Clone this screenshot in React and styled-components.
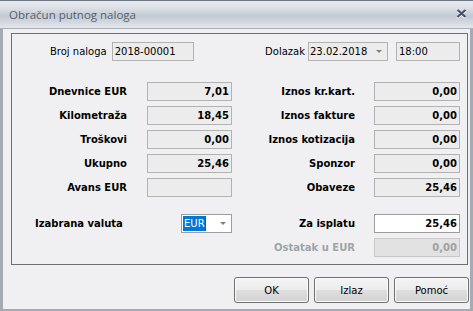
import React from "react";
import styled, { createGlobalStyle } from "styled-components";

const Global = createGlobalStyle`
  html, body { margin: 0; padding: 0; background: #f0f0f2; }
  body { font-family: "DejaVu Sans", Verdana, sans-serif; font-size: 10px; color: #000; }
  * { box-sizing: border-box; }
`;

const Window = styled.div`
  width: 473px;
  height: 311px;
  display: flex;
  flex-direction: column;
  border-top: 1px solid #6f7580;
  background: #f0f0f2;
`;

const TitleBar = styled.div`
  height: 28px;
  flex: none;
  display: flex;
  align-items: center;
  justify-content: space-between;
  padding: 0 6px 1px 9px;
  background: linear-gradient(to bottom, #e6e9ee 0%, #dde1e7 25%, #c2c9d2 55%, #d4d9e0 80%, #e5e8ed 100%);
  border-bottom: 1px solid #a9aeb6;
`;

const Title = styled.span`
  font-family: "Open Sans", "Liberation Sans", sans-serif;
  font-size: 11.5px;
  color: #55606e;
`;

const Frame = styled.div`
  flex: 1;
  display: flex;
  flex-direction: column;
  border-left: 3px solid #a6abb3;
  border-right: 3px solid #a6abb3;
  border-bottom: 2px solid #a6abb3;
  padding: 4px 2px 0 8px;
`;

const Panel = styled.div`
  border: 1px solid #6e6e6e;
  padding: 8px 7px 7px 0;
  display: flex;
  flex-direction: column;
`;

const Header = styled.div`
  display: flex;
  justify-content: space-between;
  align-items: center;
  height: 19px;
`;

const Group = styled.div`
  display: flex;
  align-items: center;
  gap: ${(p) => p.$gap || 5}px;
  margin-left: ${(p) => p.$ml || 0}px;
`;

const PlainLabel = styled.span`
  font-size: 10px;
  color: #000;
`;

const Box = styled.div`
  width: ${(p) => (p.$w ? `${p.$w}px` : "auto")};
  height: 19px;
  border: 1px solid ${(p) => (p.$white ? "#9c9c9c" : p.$disabled ? "#c8c8c8" : "#b2b2b2")};
  background: ${(p) => (p.$white ? "#ffffff" : p.$disabled ? "#e2e2e2" : "#ececec")};
  display: flex;
  align-items: center;
  justify-content: ${(p) => (p.$right ? "flex-end" : "flex-start")};
  padding: ${(p) => (p.$right ? "0 2px 0 0" : "0 0 0 2px")};
  font-size: 10px;
  font-weight: ${(p) => (p.$bold ? 700 : 400)};
  color: ${(p) => (p.$disabled ? "#a0a0a0" : "#000")};
  justify-self: ${(p) => (p.$end ? "end" : "stretch")};
  white-space: nowrap;
`;

const Combo = styled(Box)`
  justify-content: space-between;
  padding: 0 5px 0 1px;
`;

const Arrow = styled.span`
  width: 0;
  height: 0;
  border-left: 3px solid transparent;
  border-right: 3px solid transparent;
  border-top: 3px solid #808080;
`;

const Selected = styled.span`
  background: #0078d7;
  color: #fff;
  padding: 2px 0 2px 1px;
  border-right: 1px solid #6a4a2a;
`;

const Grid = styled.div`
  display: grid;
  grid-template-columns: 135px 85px 142px 86px;
  grid-template-rows: repeat(5, 19px) 7px 19px 19px;
  row-gap: 5px;
  margin-top: 21px;
`;

const Gap = styled.div`
  grid-column: 1 / -1;
`;

const Label = styled.div`
  display: flex;
  align-items: center;
  justify-content: ${(p) => (p.$left ? "flex-start" : "flex-end")};
  padding-right: ${(p) => (p.$left ? 0 : p.$pr || 20)}px;
  padding-left: ${(p) => (p.$left ? 23 : 0)}px;
  font-weight: 700;
  font-size: 10px;
  color: ${(p) => (p.$muted ? "#a0a4a8" : "#000")};
  white-space: nowrap;
`;

const Buttons = styled.div`
  display: flex;
  justify-content: flex-end;
  gap: 5px;
  margin-top: 12px;
  margin-right: -1px;
`;

const Button = styled.button`
  width: 75px;
  height: 26px;
  border: 1px solid #707070;
  border-radius: 3px;
  background: linear-gradient(to bottom, #f4f4f4 0%, #ececec 48%, #dedede 52%, #d2d2d2 100%);
  box-shadow: inset 0 0 0 1px #fbfbfb;
  font-family: "DejaVu Sans", Verdana, sans-serif;
  font-size: 10px;
  color: #000;
  padding: 0;
`;

const Close = () => (
  <svg width="11" height="10" viewBox="0 0 11 10">
    <path d="M1.5 2 L9.5 9 M9.5 2 L1.5 9" stroke="#ffffff" strokeWidth="2.2" />
    <path d="M1.5 1 L9.5 8 M9.5 1 L1.5 8" stroke="#4b4e70" strokeWidth="2.2" />
  </svg>
);

const leftRows = [
  ["Dnevnice EUR", "7,01"],
  ["Kilometraža", "18,45"],
  ["Troškovi", "0,00"],
  ["Ukupno", "25,46"],
  ["Avans EUR", ""],
];
const rightRows = [
  ["Iznos kr.kart.", "0,00"],
  ["Iznos fakture", "0,00"],
  ["Iznos kotizacija", "0,00"],
  ["Sponzor", "0,00"],
  ["Obaveze", "25,46"],
];

export default function App() {
  return (
    <>
      <Global />
      <Window>
        <TitleBar>
          <Title>Obračun putnog naloga</Title>
          <Close />
        </TitleBar>
        <Frame>
          <Panel>
            <Header>
              <Group $ml={38}>
                <PlainLabel>Broj naloga</PlainLabel>
                <Box $w={82}>2018-00001</Box>
              </Group>
              <Group $gap={8}>
                <Group $gap={3}>
                  <PlainLabel>Dolazak</PlainLabel>
                  <Combo $w={80}>
                    <span>23.02.2018</span>
                    <Arrow />
                  </Combo>
                </Group>
                <Box $w={64}>18:00</Box>
              </Group>
            </Header>
            <Grid>
              {leftRows.map((l, i) => (
                <React.Fragment key={l[0]}>
                  <Label>{l[0]}</Label>
                  <Box $right $bold>{l[1]}</Box>
                  <Label $pr={19}>{rightRows[i][0]}</Label>
                  <Box $right $bold>{rightRows[i][1]}</Box>
                </React.Fragment>
              ))}
              <Gap />
              <Label $left>Izabrana valuta</Label>
              <Combo $w={51} $white $end>
                <Selected>EUR</Selected>
                <Arrow />
              </Combo>
              <Label $pr={19}>Za isplatu</Label>
              <Box $right $bold $white>25,46</Box>
              <div />
              <div />
              <Label $pr={19} $muted>Ostatak u EUR</Label>
              <Box $right $bold $disabled>0,00</Box>
            </Grid>
          </Panel>
          <Buttons>
            <Button>OK</Button>
            <Button>Izlaz</Button>
            <Button>Pomoć</Button>
          </Buttons>
        </Frame>
      </Window>
    </>
  );
}
